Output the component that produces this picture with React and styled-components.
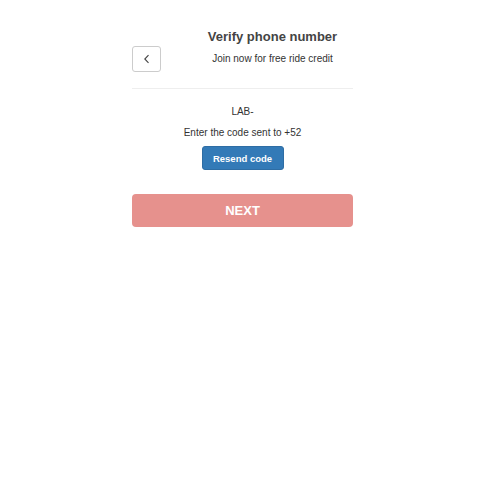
import React from 'react';
import styled, { createGlobalStyle } from 'styled-components';

const Global = createGlobalStyle`
  body {
    margin: 0;
    background: #fff;
    font-family: "Liberation Sans", Arial, sans-serif;
    color: #333;
  }
`;

const Page = styled.div`
  width: 221px;
  margin: 0 auto;
  padding-top: 29px;
`;

const Header = styled.div`
  padding-bottom: 16px;
  border-bottom: 1px solid #eee;
`;

const Title = styled.h1`
  margin: 0 0 1px;
  padding-left: 60px;
  text-align: center;
  font-size: 13px;
  font-weight: bold;
  color: #444;
  line-height: 16px;
`;

const SubRow = styled.div`
  display: flex;
  align-items: center;
`;

const BackButton = styled.button`
  width: 29px;
  height: 26px;
  padding: 0;
  border: 1px solid #ccc;
  border-radius: 3px;
  background: #fff;
  display: flex;
  align-items: center;
  justify-content: center;
`;

const Subtitle = styled.p`
  flex: 1;
  margin: 0;
  padding-left: 31px;
  text-align: center;
  font-size: 10px;
  line-height: 26px;
  color: #333;
`;

const Body = styled.div`
  display: flex;
  flex-direction: column;
  align-items: center;
  padding-top: 17px;
`;

const Line = styled.p`
  margin: 0 0 ${p => p.gap}px;
  font-size: 10px;
  line-height: 12px;
  color: #333;
`;

const Resend = styled.button`
  width: 82px;
  height: 24px;
  border: 1px solid #2e6da4;
  border-radius: 3px;
  background: #337ab7;
  color: #fff;
  font-family: inherit;
  font-size: 9.5px;
  font-weight: bold;
  padding: 0;
`;

const Next = styled.button`
  display: block;
  width: 100%;
  height: 33px;
  margin-top: 24px;
  border: none;
  border-radius: 4px;
  background: #e6918d;
  color: #fff;
  font-family: inherit;
  font-size: 13px;
  font-weight: bold;
`;

export default function App() {
  return (
    <>
      <Global />
      <Page>
        <Header>
          <Title>Verify phone number</Title>
          <SubRow>
            <BackButton aria-label="back">
              <svg width="10" height="10" viewBox="0 0 10 10">
                <path d="M6.5 1.2 L2.8 5 L6.5 8.8" fill="none" stroke="#444" strokeWidth="1.1" />
              </svg>
            </BackButton>
            <Subtitle>Join now for free ride credit</Subtitle>
          </SubRow>
        </Header>
        <Body>
          <Line gap={9}>LAB-</Line>
          <Line gap={7}>Enter the code sent to +52</Line>
          <Resend>Resend code</Resend>
        </Body>
        <Next>NEXT</Next>
      </Page>
    </>
  );
}
